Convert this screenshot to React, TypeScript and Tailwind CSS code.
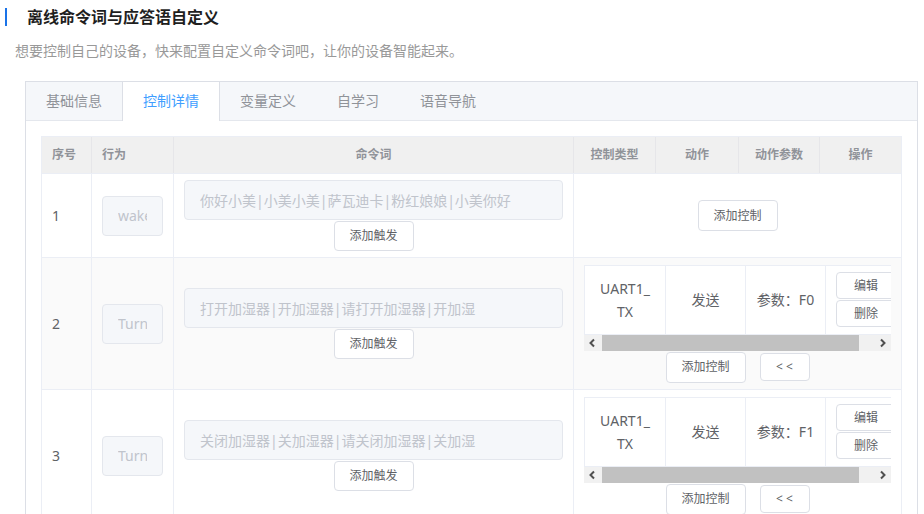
import React from "react";

type Row = {
  n: number;
  act: string;
  cmd: string;
  param: string | null;
};

const rows: Row[] = [
  { n: 1, act: "wake", cmd: "你好小美|小美小美|萨瓦迪卡|粉红娘娘|小美你好", param: null },
  { n: 2, act: "Turn on", cmd: "打开加湿器|开加湿器|请打开加湿器|开加湿", param: "F0" },
  { n: 3, act: "Turn off", cmd: "关闭加湿器|关加湿器|请关闭加湿器|关加湿", param: "F1" },
];

function Btn({ children, className }: { children: React.ReactNode; className: string }) {
  return (
    <div
      className={`flex items-center justify-center border border-[#dcdfe6] rounded-[4px] bg-white text-[12px] text-[#606266] whitespace-nowrap shrink-0 ${className}`}
    >
      {children}
    </div>
  );
}

function Chevron({ dir }: { dir: "left" | "right" }) {
  return (
    <svg width="8" height="10" viewBox="0 0 8 10">
      <path
        d={dir === "left" ? "M6 1.5 L2.5 5 L6 8.5" : "M2 1.5 L5.5 5 L2 8.5"}
        stroke="#505050"
        strokeWidth="2"
        fill="none"
      />
    </svg>
  );
}

function FakeScrollbar() {
  return (
    <div className="flex h-[16px] bg-[#f1f1f1]">
      <div className="w-[16px] h-full flex items-center justify-center">
        <Chevron dir="left" />
      </div>
      <div className="flex-1 h-full flex">
        <div className="ml-[2px] w-[257px] h-full bg-[#c1c1c1]" />
      </div>
      <div className="w-[16px] h-full flex items-center justify-center">
        <Chevron dir="right" />
      </div>
    </div>
  );
}

function Controls({ param }: { param: string }) {
  return (
    <div className="w-full flex flex-col items-center">
      <div className="w-full overflow-hidden">
        <div className="flex w-[330px] border-t border-l border-[#ebeef5] bg-white text-[14px] leading-[23px] text-[#606266]">
          <div className="w-[81px] h-[69px] shrink-0 border-r border-b border-[#ebeef5] flex items-center justify-center text-center">
            <span>
              UART1_
              <br />
              TX
            </span>
          </div>
          <div className="w-[80px] h-[69px] shrink-0 border-r border-b border-[#ebeef5] flex items-center justify-center">
            发送
          </div>
          <div className="w-[80px] h-[69px] shrink-0 border-r border-b border-[#ebeef5] flex items-center justify-center whitespace-nowrap">
            参数：{param}
          </div>
          <div className="w-[89px] h-[69px] shrink-0 border-r border-b border-[#ebeef5] pl-[10px] flex flex-col justify-center gap-[1px]">
            <Btn className="w-[60px] h-[27px]">编辑</Btn>
            <Btn className="w-[60px] h-[27px]">删除</Btn>
          </div>
        </div>
        <FakeScrollbar />
      </div>
      <div className="flex items-center gap-[14px] mt-[1px]">
        <Btn className="w-[80px] h-[31px]">添加控制</Btn>
        <Btn className="w-[50px] h-[28px]">&lt; &lt;</Btn>
      </div>
    </div>
  );
}

export default function App() {
  const tabs = ["基础信息", "控制详情", "变量定义", "自学习", "语音导航"];
  return (
    <div className="w-[924px] h-[514px] overflow-hidden bg-white font-['Noto_Sans','Noto_Sans_CJK_SC',sans-serif]">
      <div className="flex items-center pt-[8px]">
        <div className="ml-[5px] w-[2px] h-[18px] bg-[#1a73e8]" />
        <h1 className="ml-[20px] text-[16px] leading-[18px] font-bold text-[#1f1f1f]">离线命令词与应答语自定义</h1>
      </div>
      <p className="mt-[15px] ml-[15px] text-[14px] leading-[20px] text-[#999999]">
        想要控制自己的设备，快来配置自定义命令词吧，让你的设备智能起来。
      </p>

      <div className="mt-[20px] ml-[25px] w-[893px] border border-[#dcdfe6] bg-white">
        <div className="flex h-[39px] bg-[#f5f7fa] border-b border-[#e4e7ed]">
          {tabs.map((t) => {
            const active = t === "控制详情";
            return (
              <div
                key={t}
                className={
                  active
                    ? "-ml-px h-[39px] px-[20px] border-x border-[#dcdfe6] bg-white text-[14px] leading-[38px] text-[#409eff]"
                    : "-ml-px h-[39px] px-[20px] border-x border-transparent text-[14px] leading-[38px] text-[#909399]"
                }
              >
                {t}
              </div>
            );
          })}
        </div>

        <div className="p-[15px]">
          <div className="w-[861px] border-l border-t border-[#ebeef5]">
            <div className="flex h-[37px] bg-[#f0f0f0] border-b border-[#ebeef5] text-[12px] font-bold text-[#909399]">
              <div className="w-[50px] pl-[10px] border-r border-[#e6e6e9] flex items-center">序号</div>
              <div className="w-[82px] pl-[10px] border-r border-[#e6e6e9] flex items-center">行为</div>
              <div className="w-[400px] border-r border-[#e6e6e9] flex items-center justify-center">命令词</div>
              <div className="w-[82px] border-r border-[#e6e6e9] flex items-center justify-center">控制类型</div>
              <div className="w-[83px] border-r border-[#e6e6e9] flex items-center justify-center">动作</div>
              <div className="w-[81px] border-r border-[#e6e6e9] flex items-center justify-center">动作参数</div>
              <div className="w-[82px] border-r border-[#ebeef5] flex items-center justify-center">操作</div>
            </div>

            {rows.map((r) => (
              <div
                key={r.n}
                className={`flex border-b border-[#ebeef5] ${r.n === 1 ? "h-[84px]" : "h-[132px]"} ${
                  r.n === 2 ? "bg-[#fafafa]" : "bg-white"
                }`}
              >
                <div className="w-[50px] pl-[10px] border-r border-[#ebeef5] flex items-center text-[14px] text-[#606266]">
                  {r.n}
                </div>
                <div className="w-[82px] pl-[10px] border-r border-[#ebeef5] flex items-center">
                  <div className="w-[61px] h-[40px] border border-[#e4e7ed] bg-[#f5f7fa] rounded-[4px] px-[15px] flex items-center">
                    <div className="w-full overflow-hidden whitespace-nowrap text-[14px] text-[#c0c4cc]">{r.act}</div>
                  </div>
                </div>
                <div className="w-[400px] px-[10px] border-r border-[#ebeef5] flex flex-col items-center justify-center">
                  <div className="w-full h-[40px] border border-[#e4e7ed] bg-[#f5f7fa] rounded-[4px] pl-[15px] flex items-center text-[14px] text-[#c0c4cc] whitespace-nowrap overflow-hidden">
                    {r.cmd}
                  </div>
                  <Btn className="mt-[1px] w-[80px] h-[30px]">添加触发</Btn>
                </div>
                <div className="w-[328px] px-[10px] border-r border-[#ebeef5] flex flex-col items-center justify-center">
                  {r.param === null ? (
                    <Btn className="w-[80px] h-[31px]">添加控制</Btn>
                  ) : (
                    <Controls param={r.param} />
                  )}
                </div>
              </div>
            ))}
          </div>
        </div>
      </div>
    </div>
  );
}
